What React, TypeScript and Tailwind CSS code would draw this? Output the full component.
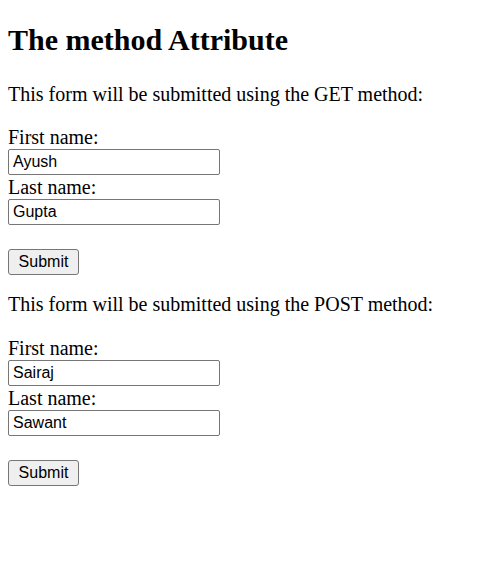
import { useState } from "react";

function NameForm({ first, last }: { first: string; last: string }) {
  const [firstName, setFirstName] = useState(first);
  const [lastName, setLastName] = useState(last);

  return (
    <form className="flex flex-col items-start" onSubmit={(e) => e.preventDefault()}>
      <label className="text-[20px] leading-[24px]">First name:</label>
      <input
        type="text"
        value={firstName}
        onChange={(e) => setFirstName(e.target.value)}
        className="w-[212px] h-[26px] px-[4px] border border-[#767676] rounded-[2px] bg-white text-[16px] text-black font-['Liberation_Sans',Arial,sans-serif] outline-none"
      />
      <label className="text-[20px] leading-[24px]">Last name:</label>
      <input
        type="text"
        value={lastName}
        onChange={(e) => setLastName(e.target.value)}
        className="w-[212px] h-[26px] px-[4px] border border-[#767676] rounded-[2px] bg-white text-[16px] text-black font-['Liberation_Sans',Arial,sans-serif] outline-none"
      />
      <button
        type="submit"
        className="mt-[24px] w-[71px] h-[26px] border border-[#767676] rounded-[3px] bg-[#efefef] text-[16px] text-black font-['Liberation_Sans',Arial,sans-serif]"
      >
        Submit
      </button>
    </form>
  );
}

export default function App() {
  return (
    <div className="min-h-[588px] bg-white px-2 pt-[22px] text-black font-['Liberation_Serif','Times_New_Roman',serif]">
      <h1 className="text-[30px] leading-[36px] font-bold">The method Attribute</h1>

      <p className="mt-[24px] text-[20px] leading-[24px]">This form will be submitted using the GET method:</p>
      <div className="mt-[19px]">
        <NameForm first="Ayush" last="Gupta" />
      </div>

      <p className="mt-[17px] text-[20px] leading-[24px]">This form will be submitted using the POST method:</p>
      <div className="mt-[20px]">
        <NameForm first="Sairaj" last="Sawant" />
      </div>
    </div>
  );
}
